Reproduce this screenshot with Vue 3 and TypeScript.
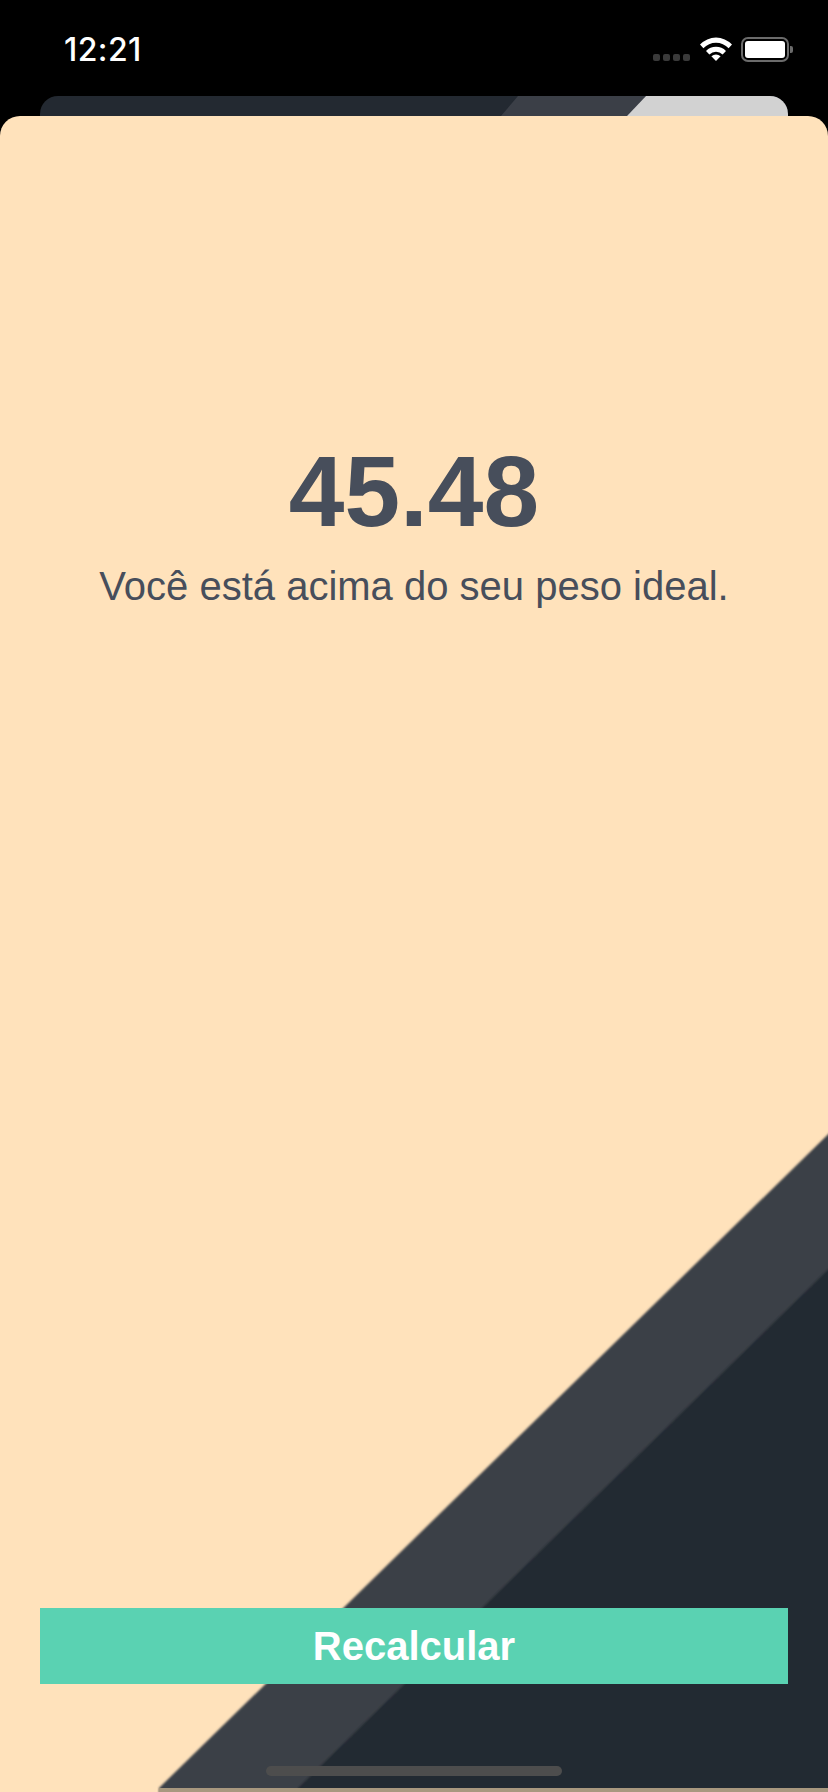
<script setup lang="ts">
const score = '45.48'
const message = 'Você está acima do seu peso ideal.'
</script>

<template>
  <div class="screen">
    <header class="status">
      <span class="time">12:21</span>
      <div class="status-icons">
        <div class="signal"><i></i><i></i><i></i><i></i></div>
        <svg class="wifi" width="32" height="24" viewBox="0 0 32 24">
          <path d="M0 7.5A22 22 0 0 1 32 7.5L28.6 11.2A17.2 17.2 0 0 0 3.4 11.2Z" fill="#fff" />
          <path d="M6 13.9A14 14 0 0 1 26 13.9L22.6 17.5A9.4 9.4 0 0 0 9.4 17.5Z" fill="#fff" />
          <path d="M11.4 19.2A7 7 0 0 1 20.6 19.2L16 24Z" fill="#fff" />
        </svg>
        <div class="battery"><div class="battery-fill"></div></div>
      </div>
    </header>
    <div class="back-card">
      <svg class="back-art" width="748" height="20" viewBox="0 0 748 20">
        <path d="M478 0H606L587 20H461Z" fill="#3b3f47" />
        <path d="M606 0H748V20H587Z" fill="#d2d2d2" />
      </svg>
    </div>
    <main class="card">
      <svg class="card-art" width="828" height="676" viewBox="0 0 828 676">
        <defs>
          <filter id="soft" x="-5%" y="-5%" width="110%" height="110%">
            <feGaussianBlur stdDeviation="0.8" />
          </filter>
        </defs>
        <g filter="url(#soft)">
          <path d="M159 672 848 -1V680H159Z" fill="#3b3f47" />
          <path d="M298 672 848 134V680H298Z" fill="#232931" />
        </g>
        <path d="M159 672H828V676H159Z" fill="#a8987f" />
      </svg>
      <section class="result">
        <h1 class="score">{{ score }}</h1>
        <p class="message">{{ message }}</p>
      </section>
      <button class="action">Recalcular</button>
      <div class="home"></div>
    </main>
  </div>
</template>

<style>
html, body { margin: 0; background: #000; }
</style>

<style scoped>
.screen {
  position: relative;
  width: 828px;
  height: 1792px;
  background: #000;
  overflow: hidden;
  font-family: "Liberation Sans", Arial, sans-serif;
  display: flex;
  flex-direction: column;
}
.status {
  height: 96px;
  flex: none;
  box-sizing: border-box;
  padding: 0 39px 0 64px;
  display: flex;
  justify-content: space-between;
  align-items: flex-start;
}
.time {
  margin-top: 32px;
  color: #fff;
  font: 500 32px/36px Inter, sans-serif;
  letter-spacing: 0.4px;
}
.status-icons {
  margin-top: 37px;
  display: flex;
  align-items: flex-start;
}
.signal {
  display: flex;
  gap: 3px;
  margin-top: 17px;
  margin-right: 10px;
}
.signal i {
  width: 7px;
  height: 7px;
  border-radius: 2px;
  background: #3a3a3a;
}
.wifi { margin-right: 9px; }
.battery {
  position: relative;
  width: 48px;
  height: 25px;
  box-sizing: border-box;
  border: 2px solid #6b6b6b;
  border-radius: 7px;
  padding: 2px;
}
.battery::after {
  content: "";
  position: absolute;
  right: -6px;
  top: 7px;
  width: 3px;
  height: 7px;
  background: #6b6b6b;
  border-radius: 0 2px 2px 0;
}
.battery-fill {
  height: 100%;
  background: #fff;
  border-radius: 3px;
}
.back-card {
  position: absolute;
  left: 40px;
  top: 96px;
  width: 748px;
  height: 40px;
  border-radius: 18px 18px 0 0;
  overflow: hidden;
  background: #232931;
}
.back-art { display: block; }
.card {
  position: relative;
  flex: 1;
  margin-top: 20px;
  background: #ffe2bb;
  border-radius: 20px 20px 0 0;
  overflow: hidden;
  display: flex;
  flex-direction: column;
  align-items: center;
}
.card-art {
  position: absolute;
  left: 0;
  bottom: 0;
}
.result {
  position: relative;
  margin-top: 318px;
  text-align: center;
  color: #474e5b;
}
.score {
  margin: 0;
  font-size: 100px;
  line-height: 115px;
  font-weight: 700;
}
.message {
  margin: 14px 0 0;
  font-size: 40px;
  line-height: 46px;
}
.action {
  position: absolute;
  left: 40px;
  right: 40px;
  top: 1492px;
  height: 76px;
  border: 0;
  background: #5ad2b2;
  color: #fff;
  font: 700 40px/46px "Liberation Sans", Arial, sans-serif;
}
.home {
  position: absolute;
  left: 266px;
  top: 1650px;
  width: 296px;
  height: 10px;
  border-radius: 5px;
  background: #4d4d4d;
}
</style>
